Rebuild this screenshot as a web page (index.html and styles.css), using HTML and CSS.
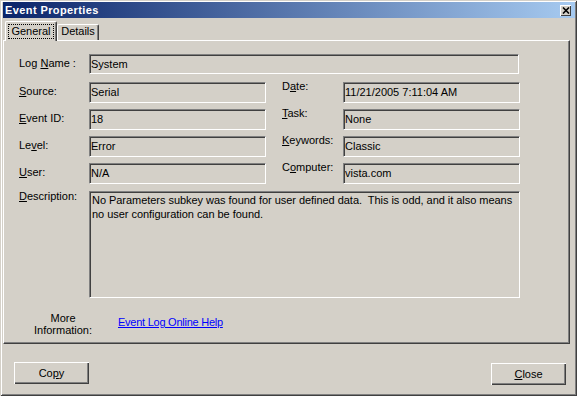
FILE: index.html
```html
<!DOCTYPE html>
<html lang="en">
<head>
    <meta charset="UTF-8">
    <title>Event Properties</title>
    <link rel="stylesheet" href="styles.css">
</head>
<body>
    <div class="window">
        <div class="titlebar">
            <span class="title">Event Properties</span>
            <span class="close-btn">
                <svg width="8" height="7" viewBox="0 0 8 7"><path d="M1 0.5 L7 6.5 M7 0.5 L1 6.5" stroke="#000" stroke-width="1.6" fill="none"/></svg>
            </span>
        </div>

        <div class="tabs">
            <div class="tab active"><span class="focus">General</span></div>
            <div class="tab">Details</div>
        </div>

        <div class="panel">
            <div class="props">
                <div class="label">Log <u>N</u>ame :</div>
                <div class="field wide">System</div>

                <div class="label"><u>S</u>ource:</div>
                <div class="field">Serial</div>
                <div class="label right">D<u>a</u>te:</div>
                <div class="field">11/21/2005 7:11:04 AM</div>

                <div class="label"><u>E</u>vent ID:</div>
                <div class="field">18</div>
                <div class="label right"><u>T</u>ask:</div>
                <div class="field">None</div>

                <div class="label">Le<u>v</u>el:</div>
                <div class="field">Error</div>
                <div class="label right"><u>K</u>eywords:</div>
                <div class="field">Classic</div>

                <div class="label"><u>U</u>ser:</div>
                <div class="field">N/A</div>
                <div class="label right">C<u>o</u>mputer:</div>
                <div class="field">vista.com</div>

                <div class="label desc-label"><u>D</u>escription:</div>
                <div class="field wide description">No Parameters subkey was found for user defined data.&nbsp; This is odd, and it also means<br>no user configuration can be found.</div>
            </div>

            <div class="info">
                <div class="info-label">More<br>Information:</div>
                <a class="help-link" href="#">Event Log Online Help</a>
            </div>
        </div>

        <div class="footer">
            <button class="btn">Co<u>p</u>y</button>
            <button class="btn close"><u>C</u>lose</button>
        </div>
    </div>
</body>
</html>
```

FILE: styles.css
```css
:root {
    --face: #d4d0c8;
    --light: #ffffff;
    --shadow: #808080;
    --dark: #404040;
}

* {
    margin: 0;
    padding: 0;
    box-sizing: border-box;
}

body {
    background: var(--face);
    color: #000;
    font-family: 'Liberation Sans', Arial, sans-serif;
    font-size: 11px;
    line-height: 13px;
}

.window {
    width: 577px;
    height: 396px;
    padding: 2px 2px 2px 3px;
    display: flex;
    flex-direction: column;
    box-shadow: inset 1px 1px var(--face), inset -1px -1px var(--dark),
                inset 2px 2px var(--light), inset -2px -2px var(--shadow);
}

/* title bar */
.titlebar {
    height: 16px;
    display: flex;
    align-items: center;
    justify-content: space-between;
    padding: 0 4px 0 2px;
    background: linear-gradient(to right, #0a246a, #a6caf0);
    color: #fff;
    font-weight: bold;
}

.title {
    letter-spacing: 0.4px;
}

.close-btn {
    width: 11px;
    height: 11px;
    display: flex;
    align-items: center;
    justify-content: center;
    background: var(--face);
    box-shadow: inset 1px 1px var(--light), inset -1px -1px var(--dark);
}

/* tabs */
.tabs {
    height: 22px;
    display: flex;
    align-items: flex-end;
    padding-left: 2px;
}

.tab {
    height: 16px;
    text-align: center;
    border-top: 1px solid var(--light);
    border-left: 1px solid var(--light);
    border-right: 1px solid var(--dark);
    border-radius: 2px 2px 0 0;
    box-shadow: inset -1px 0 var(--shadow);
    width: 42px;
}

.tab.active {
    width: 52px;
    height: 20px;
    margin-bottom: -1px;
    padding-top: 2px;
    position: relative;
    z-index: 1;
    background: var(--face);
}

.focus {
    display: inline-block;
    border: 1px dotted #000;
    padding: 0 2px;
}

/* panel */
.panel {
    height: 304px;
    margin-right: 5px;
    padding: 13px 0 0 15px;
    border-top: 1px solid var(--light);
    border-left: 1px solid var(--light);
    border-right: 1px solid var(--dark);
    border-bottom: 1px solid var(--dark);
    box-shadow: inset -1px -1px var(--shadow);
    display: flex;
    flex-direction: column;
}

.props {
    display: grid;
    grid-template-columns: 70px 177px 16px 61px 177px;
    grid-template-rows: 22px 21px 21px 21px 21px 108px;
    row-gap: 6px;
}

.label {
    grid-column: 1;
    padding-top: 3px;
    white-space: nowrap;
}

.label.right {
    grid-column: 4;
    padding-top: 0;
    margin-top: -2px;
}

.label.desc-label {
    padding-top: 0;
}

.field {
    height: 21px;
    padding: 3px 1px 0;
    white-space: nowrap;
    overflow: hidden;
    border-top: 1px solid var(--shadow);
    border-left: 1px solid var(--shadow);
    border-right: 1px solid var(--light);
    border-bottom: 1px solid var(--light);
    box-shadow: inset 1px 1px var(--dark);
}

.field.wide {
    grid-column: 2 / 6;
    height: 20px;
    width: 430px;
}

.field.description {
    height: 107px;
    width: 431px;
    align-self: end;
    padding: 1px 2px 0;
    line-height: 14px;
    letter-spacing: -0.04px;
}

.info {
    display: flex;
    margin-top: 14px;
    margin-left: 14px;
}

.info-label {
    width: 60px;
    text-align: center;
    line-height: 12px;
}

.help-link {
    margin: 4px 0 0 25px;
    color: #0000ff;
    letter-spacing: -0.25px;
}

/* buttons */
.footer {
    display: flex;
    justify-content: space-between;
    align-items: flex-start;
    margin-top: 18px;
    padding: 0 9px 0 11px;
}

.btn {
    width: 75px;
    height: 22px;
    border: none;
    background: var(--face);
    font: inherit;
    color: #000;
    box-shadow: inset 1px 1px var(--light), inset -1px -1px var(--dark),
                inset -2px -2px var(--shadow);
}

.btn.close {
    margin-top: 1px;
}
```
